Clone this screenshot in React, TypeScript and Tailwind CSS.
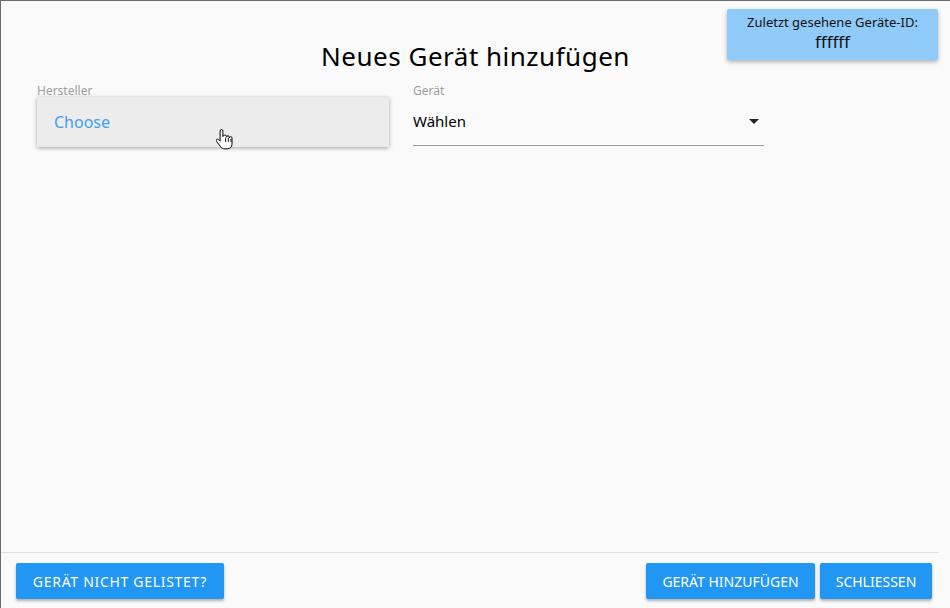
function HandCursor() {
  return (
    <svg
      className="pointer-events-none absolute left-[215px] top-[127px]"
      width="18"
      height="24"
      viewBox="0 0 18 24"
    >
      <path
        d="M5.5 1.5c-.8 0-1.4.6-1.4 1.4v10.3l-1.6-1.6c-.6-.6-1.5-.6-2 0-.5.5-.5 1.3 0 1.9l4.3 5.4c.9 1.2 2.2 1.9 3.7 1.9h3.1c2.4 0 4.4-2 4.4-4.4V10c0-.8-.6-1.4-1.4-1.4s-1.3.6-1.3 1.4v-.9c0-.8-.6-1.4-1.4-1.4s-1.3.6-1.3 1.4v-.6c0-.8-.6-1.4-1.4-1.4S6.9 7.7 6.9 8.5V2.9c0-.8-.6-1.4-1.4-1.4z"
        fill="#fff"
        stroke="#000"
        strokeWidth="1"
        strokeLinejoin="round"
      />
      <path d="M9.6 9.5v4.5M12.3 10v4M15 11v3" stroke="#000" strokeWidth="0.9" />
    </svg>
  );
}

export default function App() {
  return (
    <div className="relative flex h-[608px] w-[950px] flex-col overflow-hidden border-l border-t border-[#6b6b6b] bg-[#fafafa] font-['Noto_Sans',sans-serif] text-black">
      <div className="absolute right-[12px] top-[8px] flex h-[51px] w-[211px] flex-col items-center rounded-[2px] bg-[#90caf9] pt-[4px] shadow-[0_2px_4px_rgba(0,0,0,0.3)]">
        <span className="text-[13px] leading-[19px] text-[#111]">Zuletzt gesehene Geräte-ID:</span>
        <span className="text-[17px] leading-[20px] text-[#111]">ffffff</span>
      </div>

      <div className="flex flex-1 flex-col">
        <h1 className="pt-[37px] text-center text-[26px] leading-[36px] tracking-[0.5px]">
          Neues Gerät hinzufügen
        </h1>

        <div className="mt-[10px] flex gap-[24px] pl-[36px]">
          <div className="flex w-[352px] flex-col">
            <span className="text-[12px] leading-[13px] text-[#9e9e9e]">Hersteller</span>
            <div className="flex h-[50px] items-center bg-[#ececec] pl-[17px] shadow-[0_1px_4px_rgba(0,0,0,0.35)]">
              <span className="text-[16px] text-[#42a0f5]">Choose</span>
            </div>
          </div>

          <div className="flex w-[351px] flex-col">
            <span className="text-[12px] leading-[13px] text-[#9e9e9e]">Gerät</span>
            <div className="flex h-[49px] items-center justify-between border-b border-[#9e9e9e]">
              <span className="text-[15px]">Wählen</span>
              <svg width="10" height="5" viewBox="0 0 10 5" className="mr-[5px]">
                <path d="M0 0h10L5 5z" fill="#222" />
              </svg>
            </div>
          </div>
        </div>
      </div>

      <div className="w-[938px] border-t border-[#e0e0e0]" />
      <div className="flex h-[55px] items-start justify-between pl-[15px] pr-[18px] pt-[10px]">
        <button className="h-[36px] w-[208px] rounded-[2px] bg-[#2196f3] text-[14px] uppercase tracking-[0.7px] text-white shadow-[0_2px_3px_rgba(0,0,0,0.3)]">
          Gerät nicht gelistet?
        </button>
        <div className="flex gap-[5px]">
          <button className="h-[36px] w-[169px] rounded-[2px] bg-[#2196f3] text-[14px] uppercase text-white shadow-[0_2px_3px_rgba(0,0,0,0.3)]">
            Gerät hinzufügen
          </button>
          <button className="h-[36px] w-[112px] rounded-[2px] bg-[#2196f3] text-[14px] uppercase text-white shadow-[0_2px_3px_rgba(0,0,0,0.3)]">
            Schliessen
          </button>
        </div>
      </div>

      <HandCursor />
    </div>
  );
}
